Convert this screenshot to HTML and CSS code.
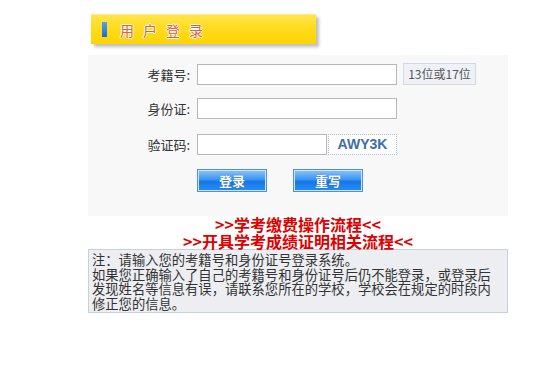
FILE: index.html
```
<!DOCTYPE html>
<html lang="zh-CN">
<head>
    <meta charset="UTF-8">
    <title>用户登录</title>
    <link rel="stylesheet" href="styles.css">
</head>
<body>
    <div class="wrap">
        <div class="title-bar">
            <span class="title-mark"></span>
            <span class="title-text">用户登录</span>
        </div>

        <!-- 登录表单 -->
        <form class="login-panel" onsubmit="return false;">
            <div class="row">
                <label for="ksh">考籍号:</label>
                <input type="text" id="ksh" class="txt">
                <span class="hint">13位或17位</span>
            </div>
            <div class="row">
                <label for="sfz">身份证:</label>
                <input type="text" id="sfz" class="txt">
            </div>
            <div class="row">
                <label for="yzm">验证码:</label>
                <input type="text" id="yzm" class="txt txt-short">
                <span class="captcha">AWY3K</span>
            </div>
            <div class="row row-btn">
                <span></span>
                <div class="btns">
                    <button class="btn">登录</button>
                    <button class="btn" type="reset">重写</button>
                </div>
            </div>
        </form>

        <div class="links">
            <a href="#">&gt;&gt;学考缴费操作流程&lt;&lt;</a>
            <a href="#">&gt;&gt;开具学考成绩证明相关流程&lt;&lt;</a>
        </div>

        <!-- 说明 -->
        <div class="notice">
            注：请输入您的考籍号和身份证号登录系统。<br>
            如果您正确输入了自己的考籍号和身份证号后仍不能登录，或登录后发现姓名等信息有误，请联系您所在的学校，学校会在规定的时段内修正您的信息。
        </div>
    </div>
</body>
</html>
```

FILE: styles.css
```
* { margin: 0; padding: 0; box-sizing: border-box; }
body {
    font-family: "Noto Sans CJK SC", "Liberation Sans", sans-serif;
    font-size: 13px; color: #333; background: #fff;
}
.wrap { width: 420px; margin-left: 88px; padding-top: 14px; }

.title-bar {
    width: 225px; height: 30px; margin-left: 3px;
    display: flex; align-items: center;
    background: linear-gradient(#ffe54d 0%, #ffdc1e 45%, #ffd400 100%);
    border-top: 1px solid #ffec80;
    box-shadow: 3px 3px 3px rgba(0,0,0,0.25);
}
.title-mark {
    width: 5px; height: 15px; margin-left: 11px;
    background: linear-gradient(#5aa0f0, #1a6ad8);
}
.title-text {
    margin-left: 13px; font-size: 14px; letter-spacing: 9px; color: #e0602a;
    text-shadow: 1px 0 0 #fff, -1px 0 0 #fff, 0 1px 0 #fff, 0 -1px 0 #fff;
}

.login-panel {
    margin-top: 11px; background: #f8f8f8; padding: 8px 0 24px;
}
.row {
    display: grid; grid-template-columns: 102px auto auto; justify-content: start;
    column-gap: 7px; align-items: center; margin-bottom: 13px;
}
.row:nth-child(2) { margin-bottom: 15px; }
.row label { text-align: right; font-size: 13px; color: #333; }
.txt {
    width: 200px; height: 21px; border: 1px solid #b8b8b8; background: #fff;
    font-size: 13px; padding: 0 3px;
}
.txt-short { width: 130px; }
.hint {
    width: 73px; height: 22px; line-height: 20px; margin-left: -1px;
    border: 1px solid #d0d8e4; background: #eef1f5;
    text-align: center; font-size: 12px; color: #555;
}
.row:nth-child(3) { column-gap: 0; }
.row:nth-child(3) .txt { margin-left: 7px; }
.captcha {
    width: 69px; height: 21px; margin-left: 1px; background: #fff;
    border: 1px dotted #b0bccc; text-align: center; line-height: 19px;
    font-family: "Liberation Sans", sans-serif; font-weight: bold;
    font-size: 14px; color: #3d6ea8;
}
.row-btn { margin-bottom: 0; padding-top: 1px; }
.btns { display: flex; gap: 26px; }
.btn {
    width: 70px; height: 23px; border: 1px solid #4d8fe0;
    box-shadow: inset 0 0 0 1px #cfe4ff;
    background: linear-gradient(#8cc4fb 0%, #3d95f2 45%, #1478ea 55%, #2a8cf4 100%);
    color: #fff; font-weight: bold; font-size: 13px;
    font-family: "Noto Sans CJK SC", sans-serif; cursor: pointer;
    text-shadow: 0 0 1px #0b4fa8;
}

.links { text-align: center; line-height: 16.5px; }
.links a {
    display: block; color: #e00000; font-weight: bold; font-size: 16px;
    text-decoration: none; font-family: "Noto Sans CJK SC", sans-serif;
}

.notice {
    border: 1px solid #c6d0de; background: #eceef1;
    padding: 3px 12px 1px 3px; line-height: 14.5px; font-size: 13.3px; color: #333;
}
```
